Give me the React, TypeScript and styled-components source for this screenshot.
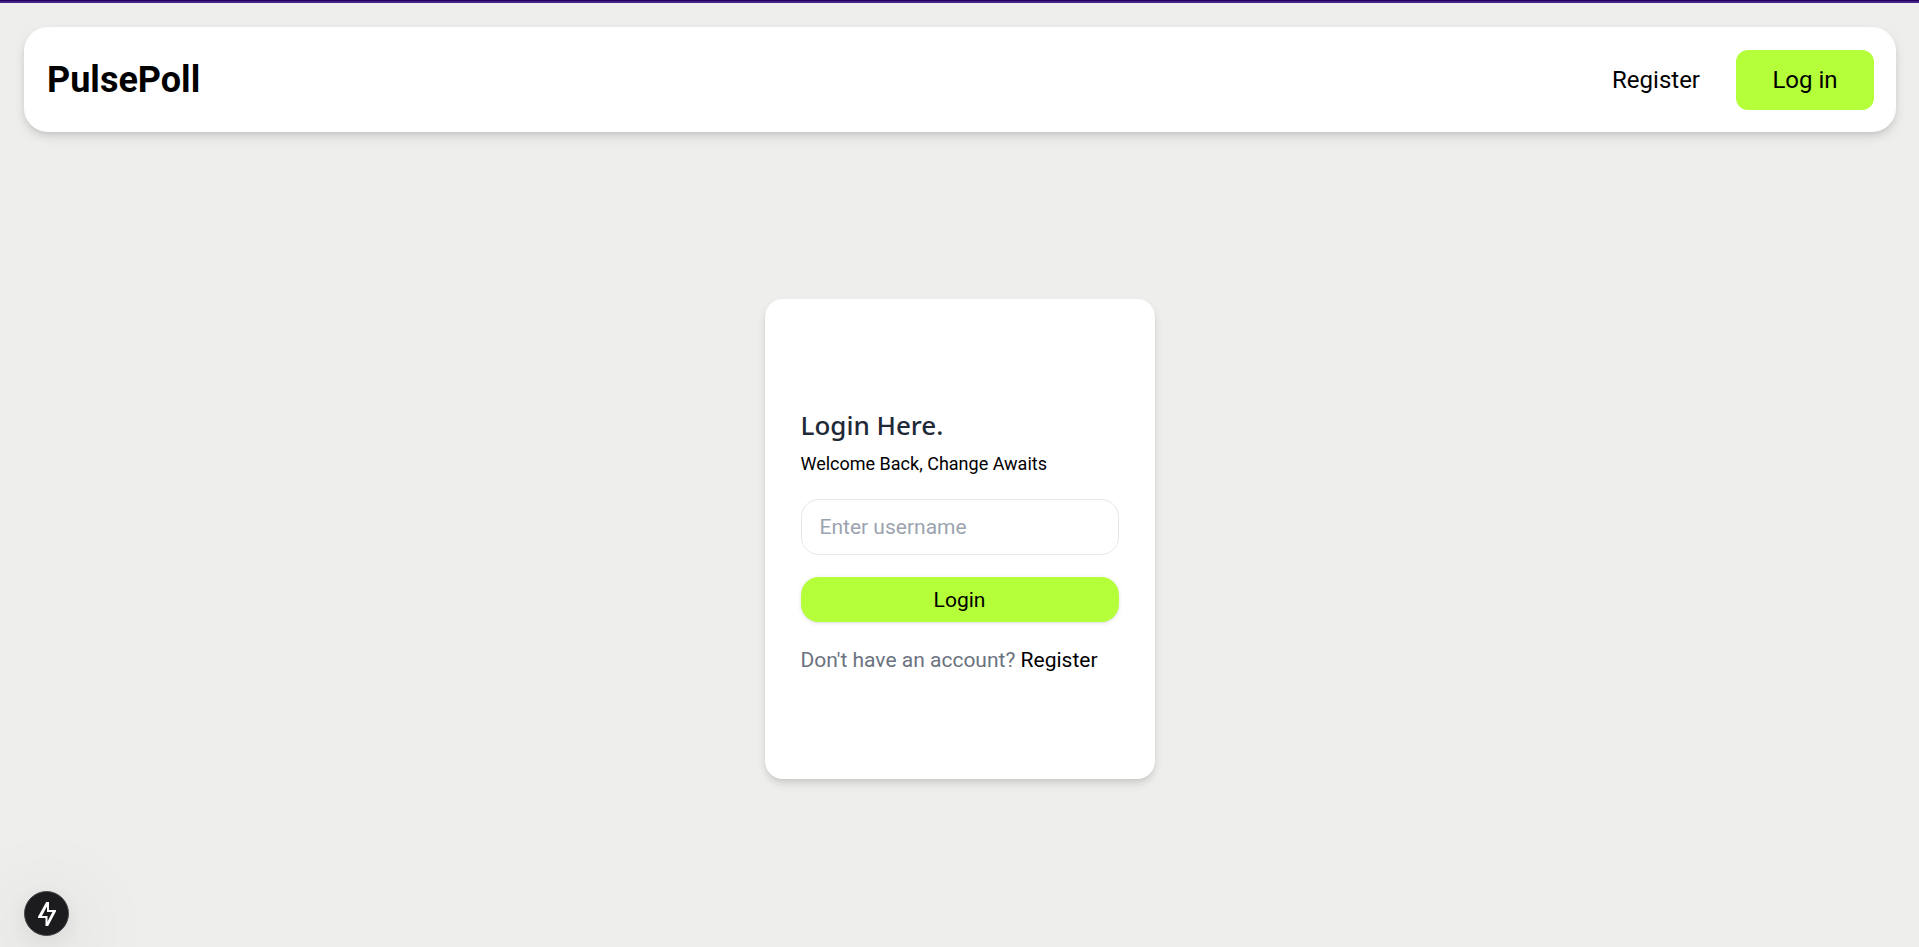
import React, { useState } from "react";
import styled, { createGlobalStyle } from "styled-components";

const GlobalStyle = createGlobalStyle`
  *, *::before, *::after { box-sizing: border-box; }
  body {
    margin: 0;
    background: #eeeeec;
    color: #000;
    font-family: Roboto, "Liberation Sans", sans-serif;
  }
  button, input { font: inherit; color: inherit; }
  a { color: inherit; text-decoration: none; }
  h1, p { margin: 0; }
`;

const Page = styled.div`
  min-height: 100vh;
  display: flex;
  flex-direction: column;
  border-top: 1px solid #1f005c;
`;

const Accent = styled.div`
  height: 2px;
  background: #45208c;
`;

const Header = styled.header`
  display: flex;
  align-items: center;
  justify-content: space-between;
  margin: 24px 23px 0 24px;
  padding: 23px 22px 22px 23px;
  border-radius: 24px;
  background: #fff;
  box-shadow: 0 5px 12px -1px rgba(0, 0, 0, 0.13), 0 3px 6px -2px rgba(0, 0, 0, 0.1);
`;

const Brand = styled.a`
  font-size: 36px;
  line-height: 40px;
  font-weight: 700;
`;

const Nav = styled.nav`
  display: flex;
  align-items: center;
  gap: 36px;
  font-size: 24px;
  line-height: 32px;
`;

const NavButton = styled.button`
  min-width: 138px;
  padding: 14px 36px;
  border: 0;
  border-radius: 12px;
  background: #b4ff39;
  cursor: pointer;
`;

const Main = styled.main`
  flex: 1;
  display: flex;
  align-items: center;
  justify-content: center;
  padding-bottom: 1px;
`;

const Card = styled.form`
  width: 390px;
  min-height: 480px;
  padding: 108px 36px 107px;
  display: flex;
  flex-direction: column;
  border-radius: 18px;
  background: #fff;
  box-shadow: 0 5px 10px -1px rgba(0, 0, 0, 0.12), 0 3px 6px -2px rgba(0, 0, 0, 0.08);
`;

const Title = styled.h1`
  color: #1f2937;
  font-family: "Noto Sans", "Open Sans", sans-serif;
  font-size: 26px;
  line-height: 36px;
  font-weight: 500;
`;

const Subtitle = styled.p`
  margin-top: 9px;
  font-size: 18px;
  line-height: 24px;
`;

const UsernameInput = styled.input`
  width: 100%;
  height: 56px;
  margin-top: 23px;
  padding: 0 18px;
  border: 1px solid #e5e7eb;
  border-radius: 18px;
  background: #fff;
  font-size: 21px;
  &::placeholder { color: #9ca3af; opacity: 1; }
`;

const SubmitButton = styled.button`
  height: 45px;
  margin-top: 22px;
  border: 0;
  border-radius: 18px;
  background: #b4ff39;
  font-size: 21px;
  box-shadow: 0 1px 4px rgba(0, 0, 0, 0.12), 0 1px 2px -1px rgba(0, 0, 0, 0.1);
  cursor: pointer;
`;

const Prompt = styled.p`
  margin-top: 26px;
  color: #6b7280;
  font-size: 21px;
  line-height: 24px;
  a { color: #000; }
`;

const DevBadge = styled.button`
  position: fixed;
  left: 24px;
  bottom: 11px;
  width: 45px;
  height: 45px;
  padding: 0;
  display: grid;
  place-items: center;
  border: 1px solid #454547;
  border-radius: 50%;
  background: #1c1c1e;
  color: #fff;
  box-shadow: 0 16px 90px rgba(0, 0, 0, 0.2), 0 6px 24px rgba(0, 0, 0, 0.08);
  cursor: pointer;
`;

export default function App() {
  const [username, setUsername] = useState("");

  return (
    <>
      <GlobalStyle />
      <Page>
        <Accent />
        <Header>
          <Brand href="#">PulsePoll</Brand>
          <Nav>
            <a href="#register">Register</a>
            <NavButton type="button">Log in</NavButton>
          </Nav>
        </Header>
        <Main>
          <Card onSubmit={(event) => event.preventDefault()}>
            <Title>Login Here.</Title>
            <Subtitle>Welcome Back, Change Awaits</Subtitle>
            <UsernameInput
              type="text"
              aria-label="Username"
              placeholder="Enter username"
              value={username}
              onChange={(event) => setUsername(event.target.value)}
            />
            <SubmitButton type="submit">Login</SubmitButton>
            <Prompt>
              Don't have an account? <a href="#register">Register</a>
            </Prompt>
          </Card>
        </Main>
      </Page>
      <DevBadge type="button" aria-label="Developer tools">
        <svg width="20" height="26" viewBox="0 0 20 26" fill="currentColor" aria-hidden="true">
          <path
            fillRule="evenodd"
            d="M9.2 1H12V9H19V10.2L11.2 25H8.5V17H1V15.8ZM10 5.4L4.9 15H10.5V20.6L15.4 11H10Z"
          />
        </svg>
      </DevBadge>
    </>
  );
}
